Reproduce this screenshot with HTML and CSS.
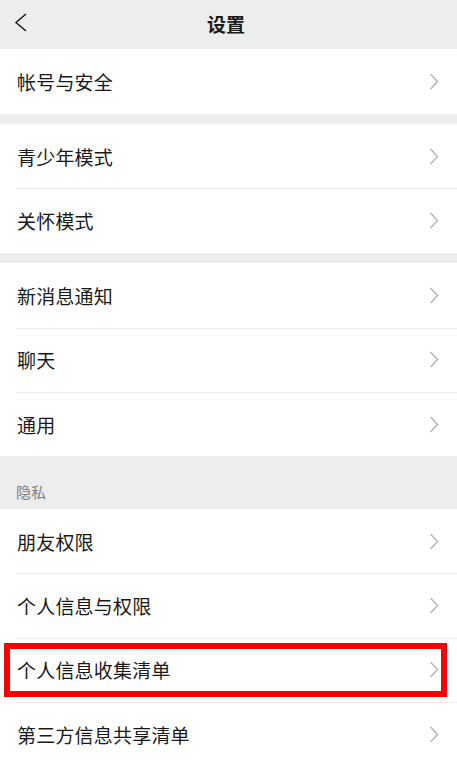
FILE: index.html
```html
<!DOCTYPE html>
<html>
<head>
<meta charset="utf-8">
<link rel="stylesheet" href="styles.css">
</head>
<body>
  <div class="header">
    <span class="back">
      <svg width="14" height="20" viewBox="0 0 14 20"><path d="M12 1 L2 9.5 L12 18" fill="none" stroke="#1a1a1a" stroke-width="1.5"/></svg>
    </span>
    <span class="title">设置</span>
  </div>

  <div class="group">
    <div class="row"><span class="label">帐号与安全</span><svg class="arrow" width="10" height="17" viewBox="0 0 10 17"><path d="M1.5 1 L8.5 8.5 L1.5 16" fill="none" stroke="#b4b4b4" stroke-width="1.4"/></svg></div>
  </div>
  <div class="gap"></div>

  <div class="group">
    <div class="row"><span class="label">青少年模式</span><svg class="arrow" width="10" height="17" viewBox="0 0 10 17"><path d="M1.5 1 L8.5 8.5 L1.5 16" fill="none" stroke="#b4b4b4" stroke-width="1.4"/></svg></div>
    <div class="row"><span class="label">关怀模式</span><svg class="arrow" width="10" height="17" viewBox="0 0 10 17"><path d="M1.5 1 L8.5 8.5 L1.5 16" fill="none" stroke="#b4b4b4" stroke-width="1.4"/></svg></div>
  </div>
  <div class="gap"></div>

  <div class="group">
    <div class="row"><span class="label">新消息通知</span><svg class="arrow" width="10" height="17" viewBox="0 0 10 17"><path d="M1.5 1 L8.5 8.5 L1.5 16" fill="none" stroke="#b4b4b4" stroke-width="1.4"/></svg></div>
    <div class="row"><span class="label">聊天</span><svg class="arrow" width="10" height="17" viewBox="0 0 10 17"><path d="M1.5 1 L8.5 8.5 L1.5 16" fill="none" stroke="#b4b4b4" stroke-width="1.4"/></svg></div>
    <div class="row"><span class="label">通用</span><svg class="arrow" width="10" height="17" viewBox="0 0 10 17"><path d="M1.5 1 L8.5 8.5 L1.5 16" fill="none" stroke="#b4b4b4" stroke-width="1.4"/></svg></div>
  </div>

  <div class="section">隐私</div>

  <div class="group">
    <div class="row"><span class="label">朋友权限</span><svg class="arrow" width="10" height="17" viewBox="0 0 10 17"><path d="M1.5 1 L8.5 8.5 L1.5 16" fill="none" stroke="#b4b4b4" stroke-width="1.4"/></svg></div>
    <div class="row"><span class="label">个人信息与权限</span><svg class="arrow" width="10" height="17" viewBox="0 0 10 17"><path d="M1.5 1 L8.5 8.5 L1.5 16" fill="none" stroke="#b4b4b4" stroke-width="1.4"/></svg></div>
    <div class="row"><span class="label">个人信息收集清单</span><svg class="arrow" width="10" height="17" viewBox="0 0 10 17"><path d="M1.5 1 L8.5 8.5 L1.5 16" fill="none" stroke="#b4b4b4" stroke-width="1.4"/></svg><span class="mark"></span></div>
    <div class="row"><span class="label">第三方信息共享清单</span><svg class="arrow" width="10" height="17" viewBox="0 0 10 17"><path d="M1.5 1 L8.5 8.5 L1.5 16" fill="none" stroke="#b4b4b4" stroke-width="1.4"/></svg></div>
  </div>
</body>
</html>
```

FILE: styles.css
```css
html, body {
  margin: 0;
  padding: 0;
  background: #ededed;
  font-family: "Noto Sans CJK SC", "Noto Sans", sans-serif;
  color: #191919;
  overflow: hidden;
}
.header {
  height: 49.3px;
  display: flex;
  align-items: center;
  justify-content: center;
  position: relative;
}
.back {
  position: absolute;
  left: 14px;
  top: 12.5px;
  width: 14px;
  height: 20px;
}
.title {
  font-size: 19px;
  font-weight: bold;
  margin-left: -5px;
  margin-top: -2px;
}
.group {
  background: #fff;
}
.gap {
  height: 10.4px;
}
.row {
  height: 64.4px;
  display: flex;
  align-items: center;
  padding-left: 17px;
  padding-right: 18px;
  box-sizing: border-box;
  position: relative;
}
.row + .row:before {
  content: "";
  position: absolute;
  left: 16px;
  right: 0;
  top: 0;
  height: 1px;
  background: #ececec;
}
.label {
  font-size: 19px;
  flex: 1;
  letter-spacing: 0.2px;
}
.arrow {
  display: block;
}
.section {
  height: 52.4px;
  box-sizing: border-box;
  padding: 25px 0 0 16px;
  font-size: 15px;
  color: #808080;
}
.mark {
  position: absolute;
  left: 4px;
  right: 10px;
  top: 5px;
  bottom: 5px;
  border: 6px solid #ff0000;
}
```
